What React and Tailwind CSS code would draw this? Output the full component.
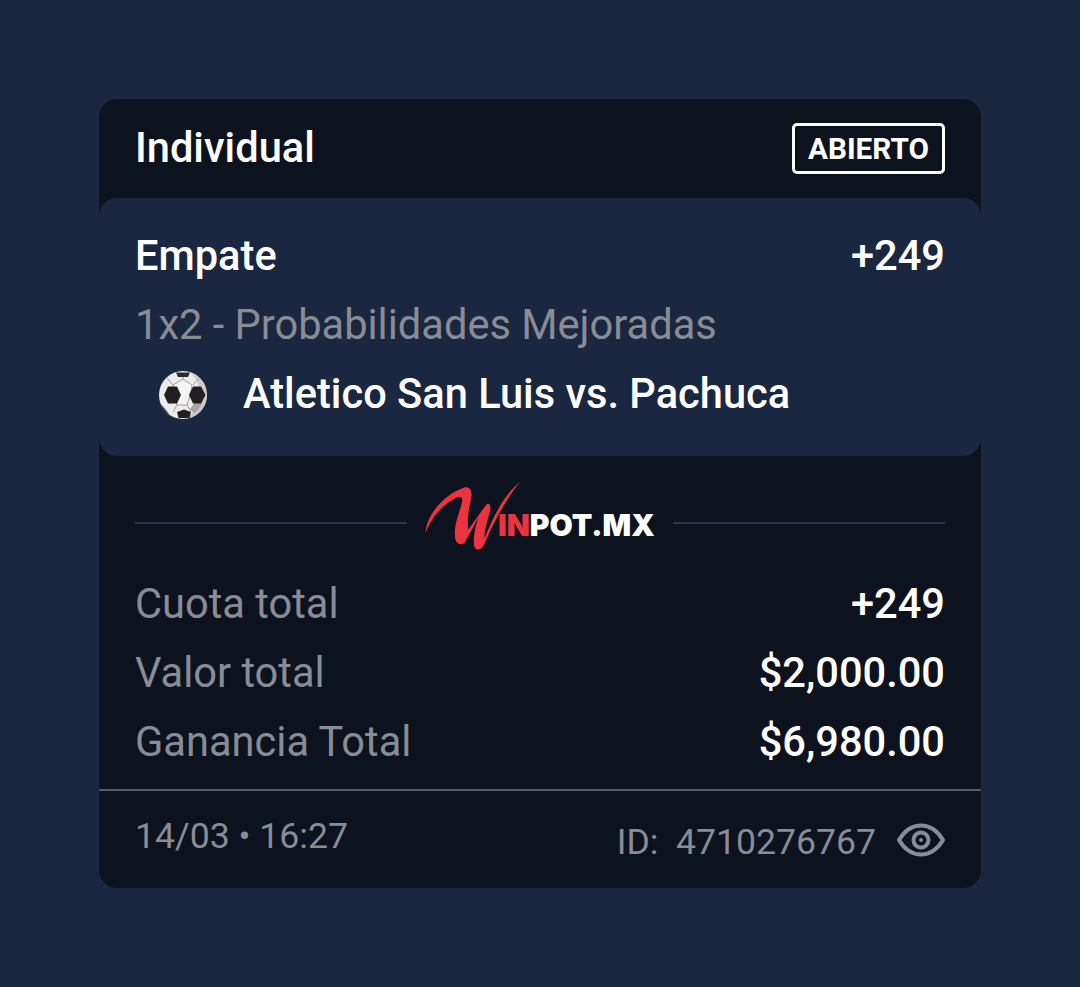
import React from "react"

const SoccerBall = () => (
  <svg viewBox="0 0 50 50" className="w-[50px] h-[50px] mt-[2px]">
    <circle cx="25" cy="25" r="24" fill="#ececec" />
    <path d="M33 3a24 24 0 0 1 9 39c-4 4-9 6-13 6.500 5-4 9-10 12-18 3-10-1-20-8-27.500z" fill="#bdbdbd" opacity="0.7" />
    <path d="M38 31l7-2c-1 6-4 11-9 14l-4-4z" fill="#a5a5a5" />
    <path d="M25 9l9 6-2 11-3 9H19l-2-9-2-11z" fill="#f4f4f4" stroke="#8b8b8b" strokeWidth="0.8" />
    <g stroke="#8b8b8b" strokeWidth="0.8" fill="none">
      <path d="M25 9V4M15 15L9 8M35 15l6-7M19 35l-4 7M29 35l4 7" />
    </g>
    <path d="M6 25l4-8.500h9l4 8.500-4 8.500h-9z" fill="#231f20" />
    <path d="M31 25l4-8.500h8l4.500 8.500-4.500 8.500h-8z" fill="#231f20" />
    <path d="M19 42l7-2.500 7 2.500-1.500 6H20.500z" fill="#231f20" />
    <path d="M18 2.500l14 0-2 4.500-10 0z" fill="#2e2a2b" />
    <path d="M3 34l5 6 5 7c-4-2-8-7-10-13z" fill="#4a4a4a" />
  </svg>
)

const WinpotLogo = () => (
  <div className="flex items-center w-[266px] h-[84px]">
    <svg viewBox="75 25 295 220" className="w-[98px] h-[73px] ml-[17px] mb-[14px] shrink-0">
      <path
        d="M80 185C80 130 140 65 195 48C215 42 222 60 216 85C208 120 205 150 208 175L262 100C270 92 278 100 274 118C262 160 255 190 258 200C285 130 320 65 365 30C330 70 285 150 255 222C245 240 225 240 225 215C224 185 232 160 240 135C225 165 210 190 200 210C190 225 170 220 168 195C165 150 190 105 190 85C190 72 178 74 165 82C130 102 95 140 80 185Z"
        fill="#ee3340"
      />
    </svg>
    <div className="ml-[-24px] text-[30px] leading-none font-black font-['Inter',sans-serif] whitespace-nowrap mt-[4px]">
      <span className="text-[#ee3340]">IN</span>
      <span className="text-white">POT.MX</span>
    </div>
  </div>
)

const Row = ({ label, value }) => (
  <div className="flex items-center justify-between h-[69px]">
    <span className="text-[#8a8c95]">{label}</span>
    <span className="text-white font-medium">{value}</span>
  </div>
)

export default function App() {
  return (
    <div className="min-h-[987px] bg-[#1a2740] pt-[99px] px-[99px] font-['Roboto',sans-serif] text-[41.600px] leading-none">
      <div className="bg-[#0d131e] rounded-[18px] overflow-hidden h-[789px] flex flex-col">
        <div className="flex items-center justify-between h-[99px] px-[36px]">
          <span className="text-white font-medium mb-[2px]">Individual</span>
          <span className="border-[3px] border-white rounded-[5px] h-[51px] w-[153px] flex items-center justify-center text-white text-[29.700px] font-bold">
            ABIERTO
          </span>
        </div>

        <div className="bg-[#1a2740] rounded-[18px] h-[258px] px-[36px] pt-[23px]">
          <div className="flex items-center justify-between h-[69px]">
            <span className="text-white font-medium">Empate</span>
            <span className="text-white font-medium">+249</span>
          </div>
          <div className="flex items-center h-[69px] text-[#8a8c95]">1x2 - Probabilidades Mejoradas</div>
          <div className="flex items-center h-[69px]">
            <div className="w-[108px] pl-[23px] shrink-0">
              <SoccerBall />
            </div>
            <span className="text-white font-medium">Atletico San Luis vs. Pachuca</span>
          </div>
        </div>

        <div className="px-[36px] pt-[25px]">
          <div className="flex items-center">
            <div className="flex-1 h-[2px] bg-[#2c3650]" />
            <WinpotLogo />
            <div className="flex-1 h-[2px] bg-[#2c3650]" />
          </div>
          <div className="mt-[4px]">
            <Row label="Cuota total" value="+249" />
            <Row label="Valor total" value="$2,000.00" />
            <Row label="Ganancia Total" value="$6,980.00" />
          </div>
        </div>

        <div className="h-[2px] bg-[#565b69] mt-[13px]" />

        <div className="flex-1 flex items-center justify-between px-[36px] text-[#8a8c95] text-[35.600px]">
          <span className="mb-[5px]">14/03 • 16:27</span>
          <div className="flex items-center">
            <span className="whitespace-pre mt-[6px]">ID:  4710276767</span>
            <svg viewBox="0 0 48 34" className="w-[48px] h-[34px] ml-[21px]" fill="none" stroke="#8a8c95">
              <path d="M2 17C8 7 15 2.500 24 2.500S40 7 46 17c-6 10-13 14.500-22 14.500S8 27 2 17z" strokeWidth="4" strokeLinejoin="round" />
              <circle cx="24" cy="17" r="7.500" strokeWidth="4" />
              <circle cx="24" cy="17" r="1.500" fill="#8a8c95" strokeWidth="1" />
            </svg>
          </div>
        </div>
      </div>
    </div>
  )
}
